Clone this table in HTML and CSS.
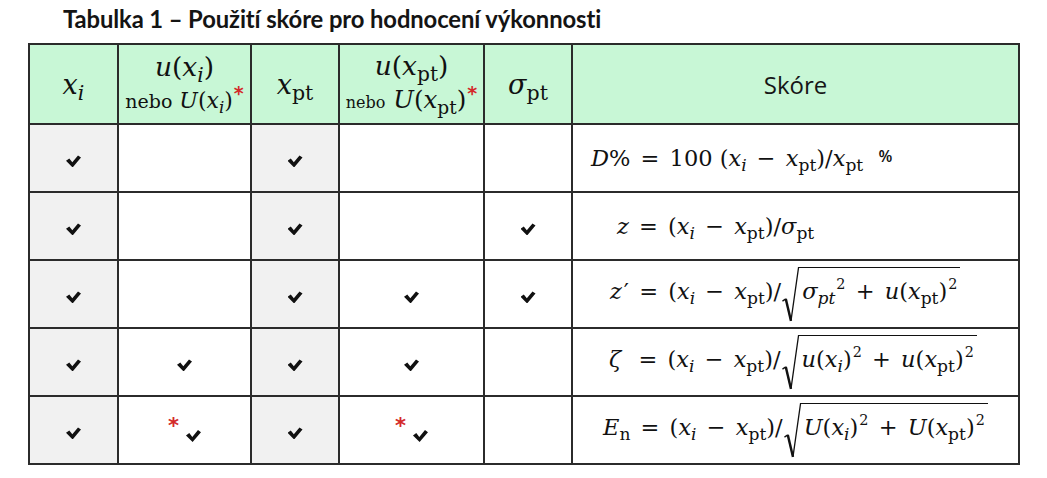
FILE: index.html
```html
<!DOCTYPE html>
<html lang="cs">
<head>
<meta charset="utf-8">
<title>Tabulka 1</title>
<link rel="stylesheet" href="styles.css">
</head>
<body>
<h1 class="title">Tabulka 1 – Použití skóre pro hodnocení výkonnosti</h1>
<table class="score-table">
  <colgroup>
    <col class="c1"><col class="c2"><col class="c3"><col class="c4"><col class="c5"><col class="c6">
  </colgroup>
  <thead>
    <tr>
      <th class="math big"><i>x</i><sub><i>i</i></sub></th>
      <th class="math">
        <div class="hl1"><i>u</i>(<i>x</i><sub><i>i</i></sub>)</div>
        <div class="hl2"><span class="nebo">nebo</span> <i>U</i>(<i>x</i><sub><i>i</i></sub>)<span class="star">*</span></div>
      </th>
      <th class="math big"><i>x</i><sub>pt</sub></th>
      <th class="math">
        <div class="hl1"><i>u</i>(<i>x</i><sub>pt</sub>)</div>
        <div class="hl2 wide"><span class="nebo small">nebo</span> <i>U</i>(<i>x</i><sub>pt</sub>)<span class="star">*</span></div>
      </th>
      <th class="math big"><i>σ</i><sub>pt</sub></th>
      <th class="skore">Skóre</th>
    </tr>
  </thead>
  <tbody>
    <tr>
      <td class="gray"><span class="chk"></span></td>
      <td></td>
      <td class="gray"><span class="chk"></span></td>
      <td></td>
      <td></td>
      <td class="formula f1"><i>D</i>% <span class="op">=</span> 100 (<i>x</i><sub><i>i</i></sub> <span class="op">−</span> <i>x</i><sub>pt</sub>)/<i>x</i><sub>pt</sub> <span class="pct">%</span></td>
    </tr>
    <tr>
      <td class="gray"><span class="chk"></span></td>
      <td></td>
      <td class="gray"><span class="chk"></span></td>
      <td></td>
      <td><span class="chk"></span></td>
      <td class="formula f2"><i>z</i> <span class="op">=</span> (<i>x</i><sub><i>i</i></sub> <span class="op">−</span> <i>x</i><sub>pt</sub>)/<i>σ</i><sub>pt</sub></td>
    </tr>
    <tr>
      <td class="gray"><span class="chk"></span></td>
      <td></td>
      <td class="gray"><span class="chk"></span></td>
      <td><span class="chk"></span></td>
      <td><span class="chk"></span></td>
      <td class="formula f3"><i>z</i><span class="prime">′</span> <span class="op">=</span> (<i>x</i><sub><i>i</i></sub> <span class="op">−</span> <i>x</i><sub>pt</sub>)/<span class="sqrt"><svg class="rad" viewBox="0 0 18 100" preserveAspectRatio="none"><path d="M0.5 62 L4 58" class="thin"/><path d="M4 58 L9.5 98" class="thick"/><path d="M9.5 98 L17.5 1 L18 1" class="thin"/></svg><span class="radicand"><i>σ</i><sub><i>pt</i></sub><sup>2</sup> <span class="op">+</span> <i>u</i>(<i>x</i><sub>pt</sub>)<sup>2</sup></span></span></td>
    </tr>
    <tr>
      <td class="gray"><span class="chk"></span></td>
      <td><span class="chk"></span></td>
      <td class="gray"><span class="chk"></span></td>
      <td><span class="chk"></span></td>
      <td></td>
      <td class="formula f4"><i>ζ</i>&nbsp; <span class="op">=</span> (<i>x</i><sub><i>i</i></sub> <span class="op">−</span> <i>x</i><sub>pt</sub>)/<span class="sqrt"><svg class="rad" viewBox="0 0 18 100" preserveAspectRatio="none"><path d="M0.5 62 L4 58" class="thin"/><path d="M4 58 L9.5 98" class="thick"/><path d="M9.5 98 L17.5 1 L18 1" class="thin"/></svg><span class="radicand"><i>u</i>(<i>x</i><sub><i>i</i></sub>)<sup>2</sup> <span class="op">+</span> <i>u</i>(<i>x</i><sub>pt</sub>)<sup>2</sup></span></span></td>
    </tr>
    <tr>
      <td class="gray"><span class="chk"></span></td>
      <td><span class="star-sm">*</span><span class="chk low"></span></td>
      <td class="gray"><span class="chk"></span></td>
      <td><span class="star-sm">*</span><span class="chk low"></span></td>
      <td></td>
      <td class="formula f5"><i>E</i><sub>n</sub> <span class="op">=</span> (<i>x</i><sub><i>i</i></sub> <span class="op">−</span> <i>x</i><sub>pt</sub>)/<span class="sqrt"><svg class="rad" viewBox="0 0 18 100" preserveAspectRatio="none"><path d="M0.5 62 L4 58" class="thin"/><path d="M4 58 L9.5 98" class="thick"/><path d="M9.5 98 L17.5 1 L18 1" class="thin"/></svg><span class="radicand"><i>U</i>(<i>x</i><sub><i>i</i></sub>)<sup>2</sup> <span class="op">+</span> <i>U</i>(<i>x</i><sub>pt</sub>)<sup>2</sup></span></span></td>
    </tr>
  </tbody>
</table>
</body>
</html>
```

FILE: styles.css
```css
html, body {
  margin: 0;
  padding: 0;
  background: #ffffff;
}

body {
  width: 1047px;
  height: 478px;
  overflow: hidden;
  color: #111;
}

.title {
  margin: 4px 0 0 63px;
  font-family: Lato, "Liberation Sans", sans-serif;
  font-weight: 700;
  font-size: 23.8px;
  line-height: 30px;
  color: #141414;
  letter-spacing: -0.1px;
}

.score-table {
  margin: 9px 0 0 28px;
  border-collapse: collapse;
  table-layout: fixed;
  width: 990px;
}

.c1 { width: 89px; }
.c2 { width: 133px; }
.c3 { width: 88px; }
.c4 { width: 145px; }
.c5 { width: 88px; }
.c6 { width: 447px; }

.score-table th,
.score-table td {
  border: 2px solid #2b2b2b;
  padding: 0;
  text-align: center;
  vertical-align: middle;
}

.score-table thead th {
  background: #c8f7d6;
  height: 78px;
  font-weight: normal;
}

.score-table tbody td {
  height: 66px;
}

.score-table td.gray {
  background: #f1f1f1;
}

.math, .formula {
  font-family: "DejaVu Serif", "Liberation Serif", serif;
  color: #111;
}

.math i, .formula i {
  font-style: italic;
}

sub {
  font-size: 0.76em;
  vertical-align: -0.3em;
  line-height: 0;
}

sup {
  font-size: 0.64em;
  vertical-align: 0.65em;
  line-height: 0;
  margin-left: 1px;
}

.big {
  font-size: 27px;
}

.hl1 {
  font-size: 26.5px;
  line-height: 34px;
}

.hl2 {
  font-size: 22px;
  line-height: 34px;
}

.hl2.wide {
  font-size: 24.5px;
}

.nebo {
  font-size: 19px;
}

.nebo.small {
  font-size: 16px;
}

.star {
  color: #d42a2a;
  font-family: "DejaVu Sans", sans-serif;
  font-weight: 700;
  font-size: 19px;
  vertical-align: 0.4em;
  line-height: 0;
  margin-left: 1px;
}

.skore {
  font-family: "Open Sans", "Liberation Sans", sans-serif;
  font-size: 24px;
  color: #161616;
}

.chk {
  display: inline-block;
  width: 15px;
  height: 12px;
  vertical-align: middle;
  background: #111;
  clip-path: polygon(0% 45%, 22% 25%, 42% 58%, 80% 0%, 100% 18%, 44% 100%);
  margin-top: 5px;
}

.chk.low {
  margin-top: 12px;
}

.star-sm {
  color: #d42a2a;
  font-family: "DejaVu Sans", sans-serif;
  font-weight: 700;
  font-size: 21px;
  vertical-align: middle;
  margin-right: 7px;
  position: relative;
  top: -4px;
}

.formula {
  font-size: 22.5px;
  text-align: left !important;
  white-space: nowrap;
}

.op {
  margin: 0 3px;
}

.prime {
  margin-left: 2px;
}

.pct {
  font-family: "Open Sans", "Liberation Sans", sans-serif;
  font-size: 16px;
  font-weight: 600;
  vertical-align: 0.25em;
  margin-left: 8px;
}

.f1 { padding-left: 18px !important; }
.f2 { padding-left: 44px !important; }
.f3 { padding-left: 37px !important; }
.f4 { padding-left: 36px !important; }
.f5 { padding-left: 30px !important; }

.sqrt {
  display: inline-flex;
  align-items: flex-start;
  vertical-align: baseline;
  margin-left: 1px;
}

.rad {
  width: 17px;
  height: 55px;
  flex: none;
  overflow: visible;
}

.rad path {
  fill: none;
  stroke: #111;
  vector-effect: non-scaling-stroke;
  stroke-linejoin: miter;
}

.rad .thin { stroke-width: 1.3; }
.rad .thick { stroke-width: 2.4; }

.radicand {
  align-self: baseline;
  border-top: 1.5px solid #111;
  padding: 9px 3px 0 3px;
  line-height: 28px;
}
```
